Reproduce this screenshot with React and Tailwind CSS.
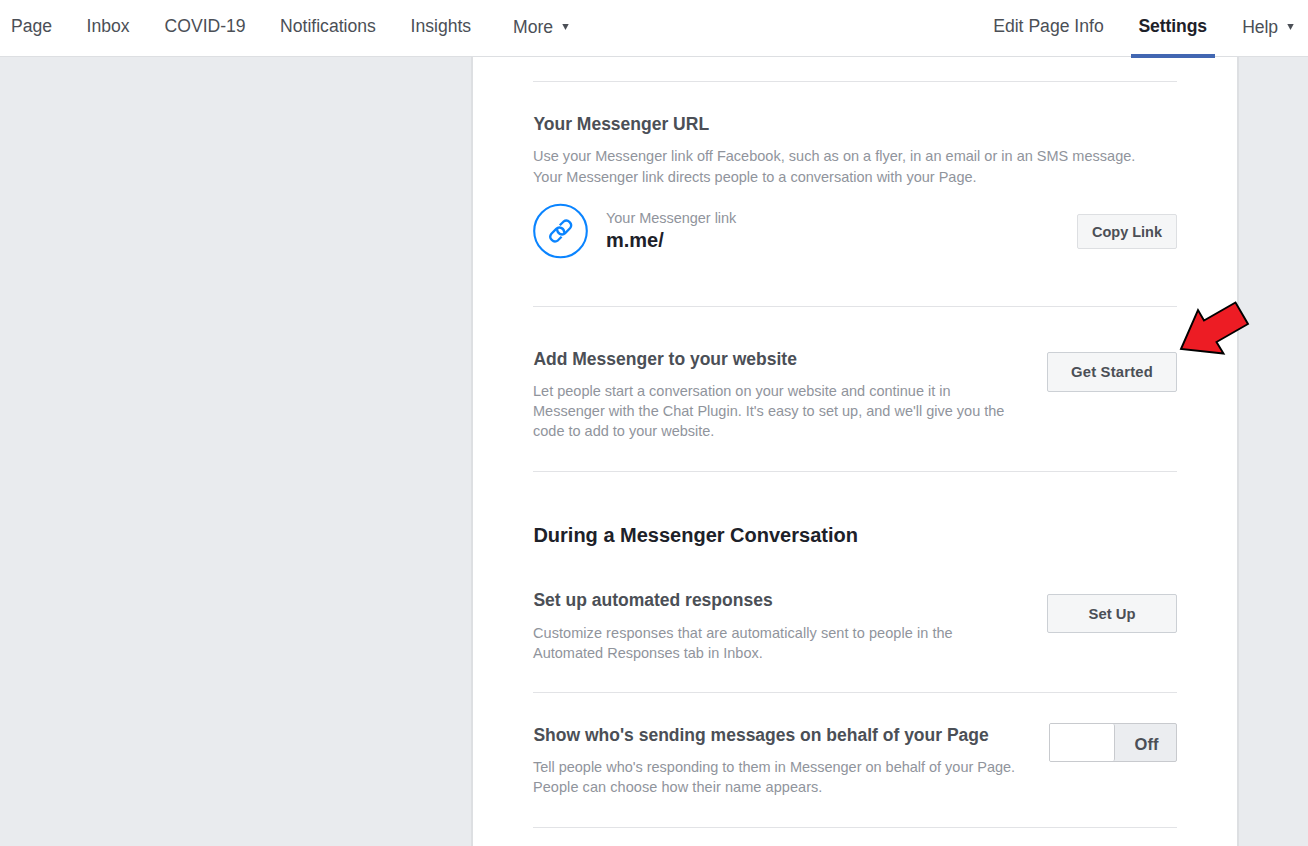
import React from 'react';

function NavItem({ children, className = '' }) {
  return <a className={`whitespace-nowrap text-[17.6px] leading-[20px] text-[#4b4f56] ${className}`}>{children}</a>;
}

function Caret() {
  return (
    <svg width="7" height="6" viewBox="0 0 7 6" className="fill-[#4b4f56]">
      <path d="M0.3 0H6.7L3.5 6Z" />
    </svg>
  );
}

function Title({ children, className = '' }) {
  return <h3 className={`whitespace-nowrap pl-[0.4px] text-[17.5px] font-bold leading-[20px] text-[#4b4f56] ${className}`}>{children}</h3>;
}

function Line({ children, className = '' }) {
  return <span className={`block whitespace-nowrap ${className}`}>{children}</span>;
}

function Description({ children, className = 'mt-[12px]' }) {
  return <p className={`w-fit text-[14.5px] leading-[20px] text-[#90949c] ${className}`}>{children}</p>;
}

function Button({ children, className = '' }) {
  return (
    <button className={`shrink-0 rounded-[2px] border bg-[#f5f6f7] font-bold text-[#4b4f56] ${className}`}>
      {children}
    </button>
  );
}

function LinkBadge() {
  return (
    <svg width="56" height="56" viewBox="0 0 56 56" fill="none" stroke="#0a84ff" className="shrink-0">
      <circle cx="27.5" cy="28" r="26.3" strokeWidth="2.1" />
      <g strokeWidth="2.3" strokeLinecap="butt" strokeLinejoin="round">
        <path d="M26.8 22.3L30.4 18.7A4.7 4.7 0 0 1 37 25.3L32.2 30.1A4.7 4.7 0 0 1 24.3 26" />
        <path d="M28.6 33.7L25 37.3A4.7 4.7 0 0 1 18.4 30.7L23.2 25.9A4.7 4.7 0 0 1 31.1 30" />
      </g>
    </svg>
  );
}

export default function App() {
  return (
    <div className="flex h-[846px] w-[1308px] flex-col overflow-hidden bg-[#e9ebee] font-['Liberation_Sans',Arial,sans-serif]">
      <header className="relative z-10 flex h-[57px] shrink-0 justify-between border-b border-[#dddfe2] bg-white pl-[11px] pr-[14px] pt-[16px]">
        <nav className="flex items-start">
          <NavItem className="w-[75.5px]">Page</NavItem>
          <NavItem className="w-[78px]">Inbox</NavItem>
          <NavItem className="w-[115.5px]">COVID-19</NavItem>
          <NavItem className="w-[130.5px]">Notifications</NavItem>
          <NavItem className="w-[102.5px]">Insights</NavItem>
          <div className="flex items-center gap-[9px] pt-px"><NavItem>More</NavItem><Caret /></div>
        </nav>
        <nav className="flex items-start">
          <NavItem>Edit Page Info</NavItem>
          <div className="ml-[27px] mr-[27.5px] flex h-[42px] w-[84px] justify-center border-b-4 border-[#4267b2]">
            <NavItem className="font-bold tracking-[-0.1px] !text-[#1d2129]">Settings</NavItem>
          </div>
          <div className="flex items-center gap-[9px] pt-px"><NavItem className="tracking-[-0.1px]">Help</NavItem><Caret /></div>
        </nav>
      </header>

      <main className="ml-[471px] flex w-[768px] grow flex-col border-x-2 border-[#dddfe2] bg-white px-[60px] pt-[24px]">
        <section className="h-[225px] shrink-0 border-t border-[#e2e3e6] pt-[32px]">
          <Title>Your Messenger URL</Title>
          <Description>
            <Line className="tracking-[0.015px]">Use your Messenger link off Facebook, such as on a flyer, in an email or in an SMS message.</Line>
            <Line className="mt-px">Your Messenger link directs people to a conversation with your Page.</Line>
          </Description>
          <div className="mt-[16px] flex">
            <LinkBadge />
            <div className="ml-[17px] grow pt-[5px]">
              <div className="text-[14.5px] leading-[20px] tracking-[-0.03px] text-[#90949c]">Your Messenger link</div>
              <div className="text-[20px] font-bold leading-[24px] text-[#1d2129]">m.me/</div>
            </div>
            <Button className="mt-[11px] h-[35px] w-[100px] border-[#dddfe2] pt-[2px] text-[14.5px]">Copy Link</Button>
          </div>
        </section>

        <section className="relative flex h-[165px] shrink-0 justify-between border-t border-[#e2e3e6]">
          <div className="pt-[42px]">
            <Title>Add Messenger to your website</Title>
            <Description>
              <Line>Let people start a conversation on your website and continue it in</Line>
              <Line>Messenger with the Chat Plugin. It's easy to set up, and we'll give you the</Line>
              <Line>code to add to your website.</Line>
            </Description>
          </div>
          <Button className="mt-[45px] h-[40px] w-[130px] border-[#ccd0d5] text-[14.8px] tracking-[0.2px]">Get Started</Button>
          <svg width="74" height="58" viewBox="1178 299 74 58" className="absolute left-[645px] top-[-8px]">
            <path d="M1181 349L1198 310L1204 320.5L1235.5 302.5L1248 324L1216.5 342L1223.5 353.5Z" fill="#ed1c24" stroke="#000" strokeWidth="1.9" />
          </svg>
        </section>

        <section className="shrink-0 border-t border-[#e2e3e6]">
          <h2 className="mt-[51px] whitespace-nowrap pl-[0.4px] text-[20px] font-bold leading-[24px] text-[#1d2129]">During a Messenger Conversation</h2>
          <div className="flex h-[145px] justify-between">
            <div className="pt-[43px]">
              <Title>Set up automated responses</Title>
              <Description className="mt-[13px]">
                <Line className="tracking-[0.06px]">Customize responses that are automatically sent to people in the</Line>
                <Line>Automated Responses tab in Inbox.</Line>
              </Description>
            </div>
            <Button className="mt-[47px] h-[39px] w-[130px] border-[#ccd0d5] pt-[2px] text-[14.8px]">Set Up</Button>
          </div>
        </section>

        <section className="flex h-[135px] shrink-0 justify-between border-t border-[#e2e3e6]">
          <div className="pt-[32px]">
            <Title>Show who's sending messages on behalf of your Page</Title>
            <Description>
              <Line className="tracking-[-0.015px]">Tell people who's responding to them in Messenger on behalf of your Page.</Line>
              <Line className="tracking-[0.06px]">People can choose how their name appears.</Line>
            </Description>
          </div>
          <button className="mt-[30px] flex h-[39px] w-[128px] shrink-0 overflow-hidden rounded-[2px] border border-[#c8cace] bg-[#ebedf0]">
            <span className="h-full w-[65px] rounded-r-[2px] border-r border-[#c8cace] bg-white" />
            <span className="flex h-full grow items-center justify-center pl-[2px] pt-[4px] text-[16.5px] font-bold text-[#4b4f56]">Off</span>
          </button>
        </section>
        <div className="border-t border-[#e2e3e6]" />
      </main>
    </div>
  );
}
